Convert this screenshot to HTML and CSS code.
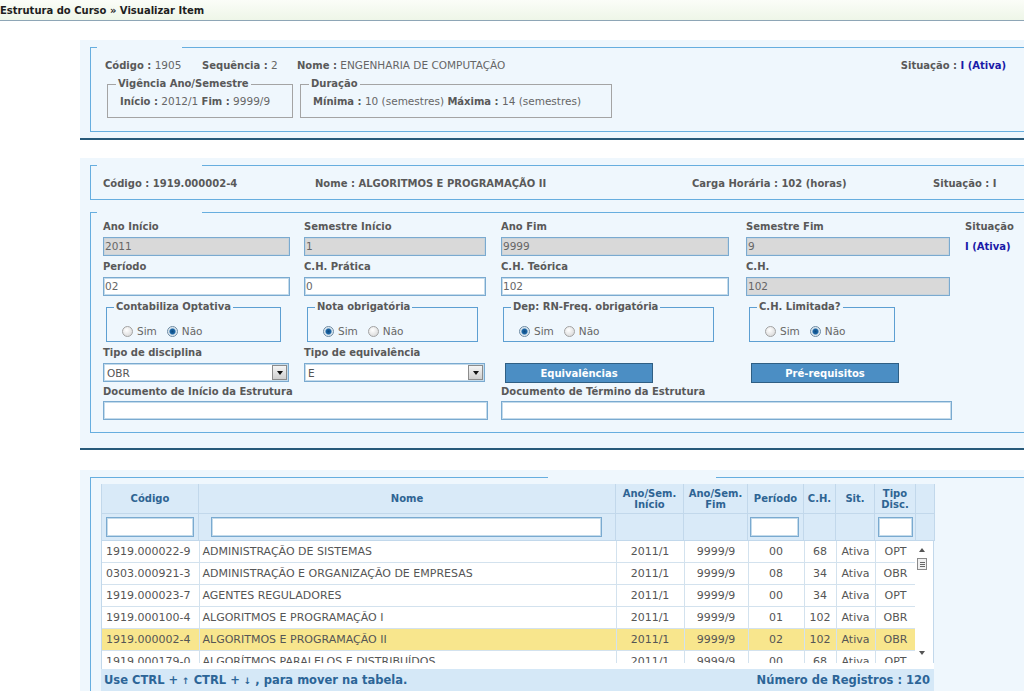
FILE: index.html
```html
<!DOCTYPE html>
<html lang="pt">
<head>
<meta charset="utf-8">
<title>Estrutura do Curso » Visualizar Item</title>
<link rel="stylesheet" href="styles.css">
</head>
<body>
<div class="titlebar">Estrutura do Curso » Visualizar Item</div>

<section class="panel p1">
  <fieldset class="frame">
    <legend class="gap g-short"></legend>
    <div class="info info1">
      <span class="i1"><b>Código :</b> 1905</span>
      <span class="i2"><b>Sequência :</b> 2</span>
      <span class="i3"><b>Nome :</b> ENGENHARIA DE COMPUTAÇÃO</span>
      <span class="i4"><b>Situação :</b> <b class="blue">I (Ativa)</b></span>
    </div>
    <div class="boxes">
      <fieldset class="box vig">
        <legend>Vigência Ano/Semestre</legend>
        <div class="box-body"><b>Início :</b> 2012/1 <b>Fim :</b> 9999/9</div>
      </fieldset>
      <fieldset class="box dur">
        <legend>Duração</legend>
        <div class="box-body"><b>Mínima :</b> 10 (semestres) <b>Máxima :</b> 14 (semestres)</div>
      </fieldset>
    </div>
  </fieldset>
</section>

<section class="panel p2">
  <fieldset class="frame">
    <legend class="gap g-mid"></legend>
    <div class="info info2">
      <span><b>Código : 1919.000002-4</b></span>
      <span><b>Nome : ALGORITMOS E PROGRAMAÇÃO II</b></span>
      <span><b>Carga Horária : 102 (horas)</b></span>
      <span><b>Situação : I</b></span>
    </div>
  </fieldset>

  <fieldset class="frame form-frame">
    <legend class="gap g-mid"></legend>
    <div class="form">
      <div class="field"><label>Ano Início</label><div class="inp w1 dis">2011</div></div>
      <div class="field"><label>Semestre Início</label><div class="inp w2 dis">1</div></div>
      <div class="field"><label>Ano Fim</label><div class="inp w3 dis">9999</div></div>
      <div class="field"><label>Semestre Fim</label><div class="inp w4 dis">9</div></div>
      <div class="field"><label>Situação</label><div class="sit-val">I (Ativa)</div></div>

      <div class="field"><label>Período</label><div class="inp w1">02</div></div>
      <div class="field"><label>C.H. Prática</label><div class="inp w2">0</div></div>
      <div class="field"><label>C.H. Teórica</label><div class="inp w3">102</div></div>
      <div class="field"><label>C.H.</label><div class="inp w4 dis">102</div></div>
      <div class="field"></div>

      <div class="field">
        <fieldset class="rbox rb1"><legend>Contabiliza Optativa</legend>
          <div class="radios"><span class="rad"></span><span class="rl">Sim</span><span class="rad on"></span><span class="rl">Não</span></div>
        </fieldset>
      </div>
      <div class="field">
        <fieldset class="rbox rb2"><legend>Nota obrigatória</legend>
          <div class="radios"><span class="rad on"></span><span class="rl">Sim</span><span class="rad"></span><span class="rl">Não</span></div>
        </fieldset>
      </div>
      <div class="field">
        <fieldset class="rbox rb3"><legend>Dep: RN-Freq. obrigatória</legend>
          <div class="radios"><span class="rad on"></span><span class="rl">Sim</span><span class="rad"></span><span class="rl">Não</span></div>
        </fieldset>
      </div>
      <div class="field">
        <fieldset class="rbox rb4"><legend>C.H. Limitada?</legend>
          <div class="radios"><span class="rad"></span><span class="rl">Sim</span><span class="rad on"></span><span class="rl">Não</span></div>
        </fieldset>
      </div>
      <div class="field"></div>

      <div class="field"><label>Tipo de disciplina</label>
        <div class="sel s1"><span>OBR</span><span class="sel-btn"><i></i></span></div></div>
      <div class="field"><label>Tipo de equivalência</label>
        <div class="sel s2"><span>E</span><span class="sel-btn"><i></i></span></div></div>
      <div class="field"><label>&nbsp;</label><button class="btn b1">Equivalências</button></div>
      <div class="field"><label>&nbsp;</label><button class="btn b2">Pré-requisitos</button></div>
      <div class="field"></div>

      <div class="field span2"><label>Documento de Início da Estrutura</label><div class="inp wd1"></div></div>
      <div class="field span2"><label>Documento de Término da Estrutura</label><div class="inp wd2"></div></div>
    </div>
  </fieldset>
</section>

<section class="panel p3">
  <fieldset class="frame table-frame">
    <legend class="gap g-table"></legend>
    <div class="grid">
      <table class="t-head">
        <colgroup>
          <col style="width:97px"><col style="width:417px"><col style="width:68px"><col style="width:64px"><col style="width:56px"><col style="width:32px"><col style="width:39px"><col style="width:41px"><col style="width:19px">
        </colgroup>
        <tr class="hdr">
          <th>Código</th><th>Nome</th><th>Ano/Sem.<br>Início</th><th>Ano/Sem.<br>Fim</th><th>Período</th><th>C.H.</th><th>Sit.</th><th>Tipo<br>Disc.</th><th class="sbh"></th>
        </tr>
        <tr class="flt">
          <td class="f-cod"><div class="fi fi-cod"></div></td>
          <td class="f-nome"><div class="fi fi-nome"></div></td>
          <td></td><td></td>
          <td class="f-per"><div class="fi fi-per"></div></td>
          <td></td><td></td>
          <td class="f-tipo"><div class="fi fi-tipo"></div></td>
          <td class="sbh"></td>
        </tr>
      </table>
      <div class="body">
        <div class="rows">
          <table class="t-body">
            <colgroup>
              <col style="width:97px"><col style="width:417px"><col style="width:68px"><col style="width:64px"><col style="width:56px"><col style="width:32px"><col style="width:39px"><col style="width:41px">
            </colgroup>
            <tr><td class="l">1919.000022-9</td><td class="n">ADMINISTRAÇÃO DE SISTEMAS</td><td>2011/1</td><td>9999/9</td><td>00</td><td>68</td><td>Ativa</td><td>OPT</td></tr>
            <tr><td class="l">0303.000921-3</td><td class="n">ADMINISTRAÇÃO E ORGANIZAÇÃO DE EMPRESAS</td><td>2011/1</td><td>9999/9</td><td>08</td><td>34</td><td>Ativa</td><td>OBR</td></tr>
            <tr><td class="l">1919.000023-7</td><td class="n">AGENTES REGULADORES</td><td>2011/1</td><td>9999/9</td><td>00</td><td>34</td><td>Ativa</td><td>OPT</td></tr>
            <tr><td class="l">1919.000100-4</td><td class="n">ALGORITMOS E PROGRAMAÇÃO I</td><td>2011/1</td><td>9999/9</td><td>01</td><td>102</td><td>Ativa</td><td>OBR</td></tr>
            <tr class="sel-row"><td class="l">1919.000002-4</td><td class="n">ALGORITMOS E PROGRAMAÇÃO II</td><td>2011/1</td><td>9999/9</td><td>02</td><td>102</td><td>Ativa</td><td>OBR</td></tr>
            <tr><td class="l">1919.000179-0</td><td class="n">ALGORÍTMOS PARALELOS E DISTRIBUÍDOS</td><td>2011/1</td><td>9999/9</td><td>00</td><td>68</td><td>Ativa</td><td>OPT</td></tr>
          </table>
        </div>
        <div class="vscroll">
          <span class="arr up"></span>
          <span class="thumb"><i></i><i></i><i></i></span>
          <span class="track"></span>
          <span class="arr down"></span>
        </div>
      </div>
      <div class="foot">
        <span>Use CTRL + <span class="ar">↑</span> CTRL + <span class="ar">↓</span> , para mover na tabela.</span>
        <span>Número de Registros : 120</span>
      </div>
    </div>
  </fieldset>
</section>
</body>
</html>
```

FILE: styles.css
```css
html, body {
  margin: 0;
  padding: 0;
  overflow: hidden;
  background: #ffffff;
}
body {
  width: 1024px;
  height: 691px;
  font-family: "DejaVu Sans", Verdana, sans-serif;
  font-size: 10px;
  color: #5a5a5a;
}
b { font-weight: bold; }

.titlebar {
  height: 20px;
  line-height: 21px;
  border-bottom: 1px solid #8ea6b6;
  background: linear-gradient(#fbfdf8, #eef6e8);
  font-weight: bold;
  font-size: 10px;
  color: #1e1e1e;
}

.panel {
  margin: 19px 0 0 80px;
  padding: 7px 0 6px 10px;
  background: #eff7fd;
  border-bottom: 2px solid #285a7a;
}
.p2 { margin-top: 18px; padding-bottom: 15px; }
.p3 { margin-top: 20px; padding: 7px 0 0 10px; border-bottom: none; height: 300px; }

.frame {
  margin: 0;
  padding: 0;
  min-width: 0;
  border: 1px solid #67aedf;
  border-right: none;
}
.gap {
  padding: 0;
  height: 0;
  margin-left: 6px;
}
.g-short { width: 85px; }
.g-mid { width: 105px; }
.g-table { width: 168px; margin-left: 447px; }

.info {
  display: flex;
  line-height: 14px;
  font-size: 10.5px;
  color: #666;
}
.info b { font-size: 10px; color: #595959; }
.info1 { padding: 10px 18px 0 14px; }
.info1 .i1 { width: 97px; }
.info1 .i2 { width: 95px; }
.info1 .i3 { flex: 1; }
.blue { color: #1a1aa8 !important; }

.boxes {
  display: flex;
  gap: 7px;
  padding: 5px 0 13px 16px;
}
.box {
  margin: 0;
  border: 1px solid #a4a4a4;
  padding: 0 8px 9px 8px;
  min-width: 0;
  box-sizing: border-box;
}
.box legend {
  padding: 0 2px;
  font-weight: bold;
  line-height: 12px;
  color: #595959;
}
.vig { width: 186px; }
.dur { width: 312px; }
.box-body {
  padding: 5px 0 0 4px;
  line-height: 13px;
  font-size: 10.5px;
  color: #666;
  white-space: nowrap;
}
.box-body b { font-size: 10px; color: #595959; }

.info2 { padding: 10px 0 8px 12px; }
.info2 span:nth-child(1) { width: 212px; }
.info2 span:nth-child(2) { width: 377px; }
.info2 span:nth-child(3) { width: 241px; }

.form-frame { margin-top: 12px; }
.form {
  display: grid;
  grid-template-columns: 201px 197px 245px 219px 1fr;
  row-gap: 5px;
  padding: 8px 0 12px 12px;
}
.field label {
  display: block;
  font-weight: bold;
  line-height: 12px;
  margin-bottom: 4px;
  color: #595959;
}
.span2 { grid-column: span 2; margin-top: -2px; }
.span2 label { margin-bottom: 3px; }

.inp {
  height: 19px;
  box-sizing: border-box;
  border: 1px solid #7aaad0;
  box-shadow: inset 0 0 0 1px #c4dbeb;
  background: #fff;
  font-size: 10.5px;
  line-height: 17px;
  padding-left: 1px;
  color: #666;
}
.inp.dis { background: #d9d9d9; box-shadow: inset 0 0 0 1px #c9d3da; }
.w1 { width: 187px; }
.w2 { width: 182px; }
.w3 { width: 228px; }
.w4 { width: 204px; }
.wd1 { width: 385px; }
.wd2 { width: 451px; }

.sit-val {
  font-weight: bold;
  color: #1a1aa8;
  line-height: 19px;
}

.rbox {
  margin: 0;
  height: 41px;
  box-sizing: border-box;
  border: 1px solid #5d9fd2;
  padding: 0 0 0 7px;
  min-width: 0;
}
.rbox legend {
  padding: 0 2px;
  font-weight: bold;
  line-height: 12px;
  color: #595959;
}
.rb1 { margin-left: 3px; width: 175px; }
.rb2 { margin-left: 3px; width: 171px; }
.rb3 { margin-left: 2px; width: 211px; }
.rb4 { margin-left: 3px; width: 146px; }
.radios {
  display: flex;
  align-items: center;
  height: 12px;
  margin-top: 12px;
  padding-left: 8px;
}
.rad {
  width: 11px;
  height: 11px;
  border-radius: 50%;
  box-sizing: border-box;
  border: 1px solid #a2a2a2;
  background: radial-gradient(circle at 40% 35%, #ffffff, #d2d2d2);
}
.rad.on {
  border-color: #6c8aa3;
  background: radial-gradient(circle, #0c4a80 0, #1c66a6 2.5px, #cfe0ec 3.5px, #f4f4f4 5px);
}
.rl {
  font-size: 10.5px;
  color: #666;
  margin: 0 10px 0 4px;
}

.sel {
  height: 19px;
  box-sizing: border-box;
  border: 1px solid #7aaad0;
  box-shadow: inset 0 0 0 1px #c4dbeb;
  background: #fff;
  display: flex;
  align-items: center;
  justify-content: space-between;
  padding: 0 1px 0 3px;
  font-size: 10.5px;
  color: #555;
}
.s1 { width: 186px; }
.s2 { width: 181px; }
.sel-btn {
  width: 15px;
  height: 15px;
  box-sizing: border-box;
  border: 1px solid #8c8c8c;
  background: linear-gradient(#f5f5f5, #cfcfcf);
  display: flex;
  align-items: center;
  justify-content: center;
}
.sel-btn i {
  width: 0;
  height: 0;
  border-left: 3.5px solid transparent;
  border-right: 3.5px solid transparent;
  border-top: 4px solid #111;
}

.btn {
  display: block;
  width: 148px;
  height: 20px;
  box-sizing: border-box;
  border: 1px solid #2f5f84;
  background: #4b8ec4;
  color: #fff;
  font-family: "DejaVu Sans", Verdana, sans-serif;
  font-weight: bold;
  font-size: 10px;
  padding: 0;
}
.b1 { margin-left: 4px; }
.b2 { margin-left: 5px; }

/* table */
.table-frame { padding: 6px 0 0 10px; border-bottom: none; height: 260px; }
.grid { width: 833px; }
table {
  border-collapse: collapse;
  table-layout: fixed;
}
.t-head { width: 833px; }
.t-head th, .t-head td {
  background: #d9eaf8;
  border-right: 1px solid #c2d8eb;
  border-bottom: 1px solid #c2d8eb;
  padding: 0;
}
.t-head tr > :first-child { border-left: 1px solid #c2d8eb; }
.t-head th {
  height: 29px;
  color: #2e6493;
  font-weight: bold;
  font-size: 10px;
  line-height: 11px;
  text-align: center;
}
.t-head .flt td { height: 26px; }
.fi {
  height: 20px;
  box-sizing: border-box;
  border: 1px solid #7aaad0;
  box-shadow: inset 0 0 0 1px #c4dbeb;
  background: #fff;
}
.f-cod { padding-left: 4px !important; }
.fi-cod { width: 88px; }
.f-nome { padding-left: 12px !important; }
.fi-nome { width: 391px; }
.f-per { padding-left: 2px !important; }
.fi-per { width: 49px; }
.f-tipo { padding-left: 3px !important; }
.fi-tipo { width: 35px; }

.body {
  display: flex;
  height: 128px;
  background: #fff;
  border-left: 1px solid #c2d8eb;
}
.rows {
  width: 814px;
  height: 122px;
  overflow: hidden;
}
.t-body { width: 814px; }
.t-body td {
  height: 21px;
  padding: 0;
  border-right: 1px solid #d3e2ee;
  border-bottom: 1px solid #d3e2ee;
  font-size: 11px;
  color: #555;
  text-align: center;
  white-space: nowrap;
  overflow: hidden;
}
.t-body td.l { text-align: left; padding-left: 4px; }
.t-body td.n { text-align: left; padding-left: 3px; }
.sel-row td { background: #f8e68d; }

.vscroll {
  width: 19px;
  height: 122px;
  display: flex;
  flex-direction: column;
  align-items: center;
  padding-right: 4px;
  box-sizing: border-box;
  background: #fff;
  border-right: 1px solid #c2d8eb;
}
.arr {
  width: 0;
  height: 0;
  border-left: 3px solid transparent;
  border-right: 3px solid transparent;
}
.arr.up { border-bottom: 4px solid #555; margin-top: 7px; }
.arr.down { border-top: 4px solid #555; margin-bottom: 8px; }
.thumb {
  margin-top: 6px;
  width: 10px;
  height: 12px;
  box-sizing: border-box;
  border: 1px solid #8a8a8a;
  background: #f0f0f0;
  display: flex;
  flex-direction: column;
  justify-content: center;
  align-items: center;
  gap: 1px;
}
.thumb i { display: block; width: 5px; height: 1px; background: #666; }
.track { flex: 1; }

.foot {
  display: flex;
  justify-content: space-between;
  background: #d5e8f7;
  height: 24px;
  line-height: 22px;
  padding: 0 4px 0 3px;
  font-weight: bold;
  font-size: 11.5px;
  color: #2c6597;
}
.ar { font-size: 9px; }
```
